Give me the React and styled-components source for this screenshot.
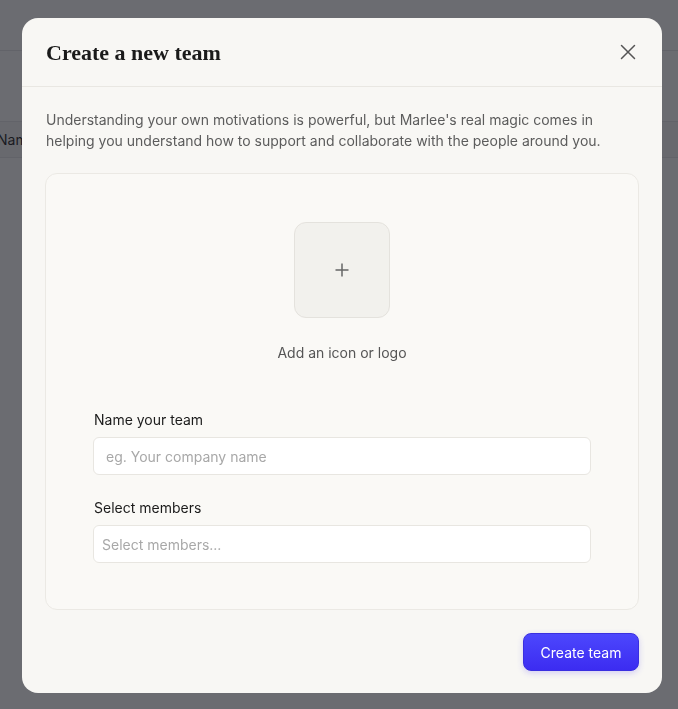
import React from "react";
import styled, { createGlobalStyle } from "styled-components";

const Global = createGlobalStyle`
  html, body { margin: 0; padding: 0; }
  body {
    font-family: Inter, "Noto Sans", sans-serif;
    background: #ffffff;
    width: 678px;
    height: 709px;
    overflow: hidden;
  }
  * { box-sizing: border-box; }
`;

const Page = styled.div`
  width: 678px;
  height: 709px;
  background: #ffffff;
  display: flex;
  flex-direction: column;
`;

const TopBar = styled.div`
  height: 51px;
  border-bottom: 1px solid #e4e4e6;
`;

const Spacer = styled.div`
  height: 70px;
`;

const TableHead = styled.div`
  height: 37px;
  border-top: 1px solid #e4e4e6;
  border-bottom: 1px solid #e4e4e6;
  background: #f6f6f7;
  display: flex;
  align-items: center;
  font-size: 14px;
  color: #111;
  margin-left: -3px;
`;

const Backdrop = styled.div`
  position: fixed;
  inset: 0;
  background: rgba(30, 32, 40, 0.66);
`;

const Modal = styled.div`
  position: fixed;
  left: 22px;
  top: 18px;
  width: 640px;
  height: 675px;
  background: #f8f7f4;
  border-radius: 16px;
  display: flex;
  flex-direction: column;
  overflow: hidden;
`;

const Header = styled.div`
  height: 69px;
  border-bottom: 1px solid #e9e7e2;
  display: flex;
  align-items: center;
  justify-content: space-between;
  padding: 0 24px 0 24px;
`;

const Title = styled.h2`
  margin: 0;
  font-family: "Liberation Serif", "DejaVu Serif", serif;
  font-weight: 700;
  font-size: 22px;
  letter-spacing: 0px;
  color: #1a1a1a;
  padding-top: 1px;
`;

const CloseButton = styled.button`
  border: 0;
  background: transparent;
  padding: 0;
  width: 20px;
  height: 20px;
  display: flex;
  align-items: center;
  justify-content: center;
  cursor: pointer;
`;

const Body = styled.div`
  padding: 22px 23px 0 23px;
  display: flex;
  flex-direction: column;
`;

const Intro = styled.p`
  margin: 0 0 0 1px;
  font-size: 14px;
  line-height: 21px;
  color: #5c5c5c;
`;

const Card = styled.div`
  margin-top: 22px;
  height: 437px;
  border: 1px solid #ebe9e4;
  border-radius: 12px;
  background: #faf9f6;
  display: flex;
  flex-direction: column;
  align-items: center;
  padding: 48px 47px 0 47px;
`;

const UploadBox = styled.button`
  width: 96px;
  height: 96px;
  border-radius: 12px;
  border: 1px solid #e4e2dd;
  background: #f2f1ed;
  display: flex;
  align-items: center;
  justify-content: center;
  padding: 0;
  cursor: pointer;
`;

const UploadLabel = styled.div`
  margin-top: 25px;
  font-size: 14px;
  color: #555;
  line-height: 20px;
`;

const Field = styled.div`
  align-self: stretch;
  display: flex;
  flex-direction: column;
  margin-top: ${(p) => p.$top}px;
`;

const Label = styled.label`
  font-size: 14px;
  color: #1b1b1b;
  line-height: 20px;
  margin-left: 1px;
`;

const Input = styled.input`
  margin-top: 7px;
  height: 38px;
  width: 100%;
  border: 1px solid #e8e6e1;
  border-radius: 6px;
  background: #ffffff;
  padding: 0 ${(p) => p.$pad}px;
  font-family: Inter, "Noto Sans", sans-serif;
  font-size: 14px;
  color: #222;
  outline: none;
  &::placeholder { color: #a8a8a8; }
`;

const Footer = styled.div`
  display: flex;
  justify-content: flex-end;
  padding: 23px 23px 0 23px;
`;

const PrimaryButton = styled.button`
  height: 38px;
  width: 116px;
  border-radius: 8px;
  border: 1px solid #3a2fe0;
  background: linear-gradient(180deg, #4c47fd 0%, #3c2cf1 100%);
  color: #ffffff;
  font-family: Inter, "Noto Sans", sans-serif;
  font-size: 14px;
  box-shadow: 0 2px 6px rgba(60, 44, 241, 0.2);
  cursor: pointer;
`;

export default function App() {
  return (
    <>
      <Global />
      <Page>
        <TopBar />
        <Spacer />
        <TableHead>Name</TableHead>
      </Page>
      <Backdrop />
      <Modal>
        <Header>
          <Title>Create a new team</Title>
          <CloseButton aria-label="Close">
            <svg width="16" height="16" viewBox="0 0 16 16" fill="none" stroke="#555" strokeWidth="1.5" strokeLinecap="round">
              <path d="M1.5 1.5 L14.5 14.5 M14.5 1.5 L1.5 14.5" />
            </svg>
          </CloseButton>
        </Header>
        <Body>
          <Intro>
            Understanding your own motivations is powerful, but Marlee's real magic comes in helping you understand how to support and collaborate with the people around you.
          </Intro>
          <Card>
            <UploadBox aria-label="Add an icon or logo">
              <svg width="16" height="16" viewBox="0 0 16 16" fill="none" stroke="#666" strokeWidth="1.5">
                <path d="M8 1.5 V14.5 M1.5 8 H14.5" />
              </svg>
            </UploadBox>
            <UploadLabel>Add an icon or logo</UploadLabel>
            <Field $top={47}>
              <Label>Name your team</Label>
              <Input $pad={12} placeholder="eg. Your company name" />
            </Field>
            <Field $top={23}>
              <Label>Select members</Label>
              <Input $pad={8} placeholder="Select members..." />
            </Field>
          </Card>
        </Body>
        <Footer>
          <PrimaryButton>Create team</PrimaryButton>
        </Footer>
      </Modal>
    </>
  );
}
